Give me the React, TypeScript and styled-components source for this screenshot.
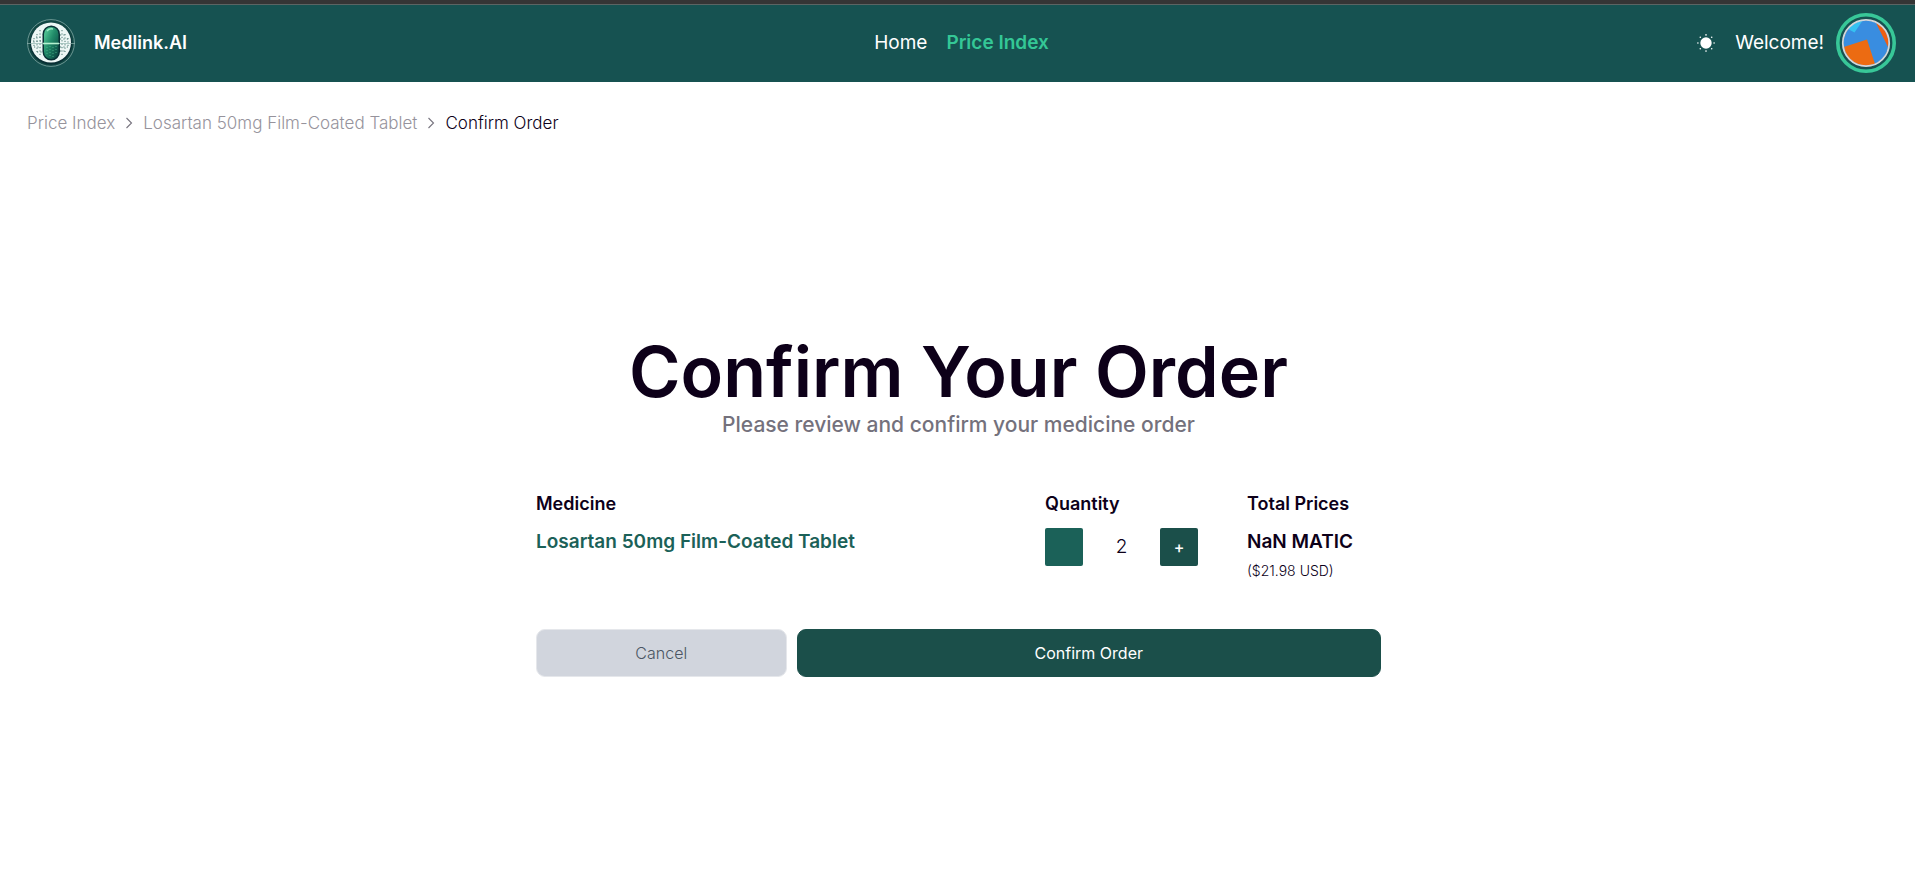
import React, { useState } from "react";
import styled, { createGlobalStyle } from "styled-components";

const GlobalStyle = createGlobalStyle`
  *, *::before, *::after { box-sizing: border-box; }
  body {
    margin: 0;
    background: #ffffff;
    color: #0d0019;
    font-family: Inter, "Liberation Sans", sans-serif;
    font-size: 18px;
    line-height: 28px;
  }
  h1, p { margin: 0; }
  a { color: inherit; text-decoration: none; }
  button { font: inherit; border: 0; padding: 0; cursor: pointer; }
`;

const Page = styled.div`
  min-height: 100vh;
  display: flex;
  flex-direction: column;
`;

const Header = styled.header`
  display: grid;
  grid-template-columns: 1fr auto 1fr;
  align-items: center;
  height: 82px;
  padding: 0 19px 0 27px;
  border-top: 4px solid #353535;
  background: #165251;
  box-shadow: inset 0 1px 0 #5b6463;
  color: #ffffff;
`;

const Brand = styled.a`
  display: flex;
  align-items: center;
  gap: 19px;
  font-weight: 600;
`;

const Nav = styled.nav`
  display: flex;
  gap: 19px;
  font-size: 19px;
`;

const NavLink = styled.a<{ $active?: boolean }>`
  color: ${(p) => (p.$active ? "#34c796" : "#ffffff")};
  font-weight: ${(p) => (p.$active ? 600 : 400)};
`;

const Account = styled.div`
  display: flex;
  align-items: center;
  justify-content: flex-end;
  font-size: 19px;
`;

const ThemeButton = styled.button`
  display: flex;
  margin-right: 20px;
  background: none;
`;

const AvatarButton = styled.button`
  display: flex;
  margin-left: 12px;
  background: none;
`;

const Breadcrumbs = styled.nav`
  padding: 27px;
  font-size: 17px;
  font-weight: 300;

  ol {
    display: flex;
    align-items: center;
    gap: 10px;
    margin: 0;
    padding: 0;
    list-style: none;
  }
  li {
    display: flex;
    align-items: center;
    gap: 10px;
  }
`;

const Crumb = styled.a`
  color: #96939c;
`;

const Main = styled.main`
  flex: 1;
  display: flex;
  flex-direction: column;
  align-items: center;
  padding: 172px 24px 24px 26px;
`;

const Order = styled.section`
  width: 100%;
  max-width: 845px;
`;

const Title = styled.h1`
  font-size: 70px;
  font-weight: 600;
  line-height: 72px;
  text-align: center;
`;

const Subtitle = styled.p`
  margin-bottom: 48px;
  color: #74717c;
  font-size: 21px;
  font-weight: 500;
  line-height: 34px;
  text-align: center;
`;

const OrderTable = styled.table`
  width: 100%;
  table-layout: fixed;
  border-collapse: collapse;

  th, td {
    padding: 0;
    text-align: left;
    vertical-align: top;
    font-weight: 600;
  }
  th { padding-bottom: 10px; }
  td { font-size: 19px; }
  th:nth-child(2) { width: 202px; }
  th:nth-child(3) { width: 134px; }
`;

const MedicineName = styled.td`
  color: #1b6158;
`;

const Stepper = styled.div`
  display: flex;
  align-items: center;
  justify-content: space-between;
  width: 153px;
  font-weight: 300;
`;

const StepButton = styled.button<{ $plain?: boolean }>`
  width: 38px;
  height: 38px;
  border-radius: 2px;
  background: ${(p) => (p.$plain ? "#1b6158" : "#1b4f4a")};
  color: #ffffff;
  font-size: 16px;
  font-weight: 500;
`;

const Usd = styled.div`
  font-size: 14px;
  font-weight: 300;
  line-height: 30px;
`;

const Actions = styled.div`
  display: grid;
  grid-template-columns: 3fr 7fr;
  gap: 10px;
  margin-top: 43px;
`;

const ActionButton = styled.button<{ $primary?: boolean }>`
  height: 48px;
  border: 1px solid ${(p) => (p.$primary ? "#1b4f4a" : "#e5e7eb")};
  border-radius: 9px;
  background: ${(p) => (p.$primary ? "#1b4f4a" : "#d1d5dd")};
  color: ${(p) => (p.$primary ? "#ffffff" : "#4b5563")};
  font-size: 16px;
  font-weight: ${(p) => (p.$primary ? 400 : 300)};
`;

function Logo() {
  return (
    <svg width="48" height="48" viewBox="0 0 48 48" aria-hidden="true">
      <defs>
        <linearGradient id="pill" x1="0" y1="0" x2="1" y2="1">
          <stop offset="0" stopColor="#5fd6a0" />
          <stop offset="0.45" stopColor="#218b69" />
          <stop offset="1" stopColor="#063c3b" />
        </linearGradient>
      </defs>
      <circle cx="24" cy="24" r="23.4" fill="#114744" stroke="#83aaa6" strokeWidth="0.8" />
      <circle cx="24" cy="24.5" r="21" fill="#082f34" />
      <circle cx="24" cy="23.5" r="20" fill="#edf7f5" />
      <g fill="none" stroke="#3d6e6a" strokeWidth="0.9" strokeDasharray="1.2 2.2">
        <path d="M13 11v26M10 15v18M7 19v10M35 11v26M38 15v18M41 19v10" />
        <path d="M9 18h6M6 22h9M7 28h7M10 33h5M33 16h6M33 20h8M33 28h8M33 32h6" />
      </g>
      <rect x="15.5" y="6.5" width="17.5" height="35" rx="8.7" fill="#082f34" />
      <rect x="17" y="8" width="14.5" height="32" rx="7.2" fill="url(#pill)" />
      <path d="M20 12q2-3 6-2" fill="none" stroke="#9aebc4" strokeWidth="1.4" />
      <path d="M20 28v8M23 27v11M26 28v10M29 27v8" stroke="#52bd8f" strokeWidth="0.8" strokeDasharray="1 2" />
      <path d="M0 24.5h48" stroke="#8fb5af" strokeWidth="0.7" />
      <path d="M16 24.5h16" stroke="#b5f1d0" strokeWidth="1.6" />
    </svg>
  );
}

function Sun() {
  return (
    <svg width="18" height="18" viewBox="0 0 18 18" fill="#ffffff" aria-hidden="true">
      <circle cx="9" cy="9" r="5.7" />
      <circle cx="9" cy="0.9" r="0.8" />
      <circle cx="9" cy="17.1" r="0.8" />
      <circle cx="0.9" cy="9" r="0.8" />
      <circle cx="17.1" cy="9" r="0.8" />
      <circle cx="3.3" cy="3.3" r="0.8" />
      <circle cx="14.7" cy="3.3" r="0.8" />
      <circle cx="3.3" cy="14.7" r="0.8" />
      <circle cx="14.7" cy="14.7" r="0.8" />
    </svg>
  );
}

function Avatar() {
  return (
    <svg width="60" height="60" viewBox="0 0 60 60" aria-hidden="true">
      <defs>
        <clipPath id="face">
          <circle cx="30" cy="30" r="22.5" />
        </clipPath>
      </defs>
      <circle cx="30" cy="30" r="28.2" fill="none" stroke="#38c798" strokeWidth="3.6" />
      <g clipPath="url(#face)">
        <rect width="60" height="60" fill="#398de0" />
        <path d="M12 16L18.5 19.5L27 7H12z" fill="#35c2f2" />
        <path d="M38 6L53 36H60V6z" fill="#ef5e12" />
        <path d="M5 35L31 26.5L40 54H5z" fill="#ec6b12" />
      </g>
      <circle cx="30" cy="30" r="23.2" fill="none" stroke="#d5d7dc" strokeWidth="1.8" />
    </svg>
  );
}

function Chevron() {
  return (
    <svg width="8" height="12" viewBox="0 0 8 12" fill="none" stroke="#77747f" strokeWidth="1.1" aria-hidden="true">
      <path d="M1.5 1L6.5 6L1.5 11" />
    </svg>
  );
}

export default function App() {
  const [quantity, setQuantity] = useState(2);

  return (
    <Page>
      <GlobalStyle />
      <Header>
        <Brand href="#">
          <Logo />
          Medlink.AI
        </Brand>
        <Nav aria-label="Main">
          <NavLink href="#">Home</NavLink>
          <NavLink href="#" $active>Price Index</NavLink>
        </Nav>
        <Account>
          <ThemeButton type="button" aria-label="Switch theme">
            <Sun />
          </ThemeButton>
          <span>Welcome!</span>
          <AvatarButton type="button" aria-label="Account">
            <Avatar />
          </AvatarButton>
        </Account>
      </Header>

      <Breadcrumbs aria-label="Breadcrumb">
        <ol>
          <li>
            <Crumb href="#">Price Index</Crumb>
            <Chevron />
          </li>
          <li>
            <Crumb href="#">Losartan 50mg Film-Coated Tablet</Crumb>
            <Chevron />
          </li>
          <li aria-current="page">Confirm Order</li>
        </ol>
      </Breadcrumbs>

      <Main>
        <Order>
          <Title>Confirm Your Order</Title>
          <Subtitle>Please review and confirm your medicine order</Subtitle>
          <OrderTable>
            <thead>
              <tr>
                <th scope="col">Medicine</th>
                <th scope="col">Quantity</th>
                <th scope="col">Total Prices</th>
              </tr>
            </thead>
            <tbody>
              <tr>
                <MedicineName>Losartan 50mg Film-Coated Tablet</MedicineName>
                <td>
                  <Stepper>
                    <StepButton
                      type="button"
                      $plain
                      aria-label="Decrease quantity"
                      onClick={() => setQuantity((q) => Math.max(1, q - 1))}
                    />
                    <output>{quantity}</output>
                    <StepButton
                      type="button"
                      aria-label="Increase quantity"
                      onClick={() => setQuantity((q) => q + 1)}
                    >
                      +
                    </StepButton>
                  </Stepper>
                </td>
                <td>
                  NaN MATIC
                  <Usd>(${(quantity * 10.99).toFixed(2)} USD)</Usd>
                </td>
              </tr>
            </tbody>
          </OrderTable>
          <Actions>
            <ActionButton type="button">Cancel</ActionButton>
            <ActionButton type="button" $primary>Confirm Order</ActionButton>
          </Actions>
        </Order>
      </Main>
    </Page>
  );
}
